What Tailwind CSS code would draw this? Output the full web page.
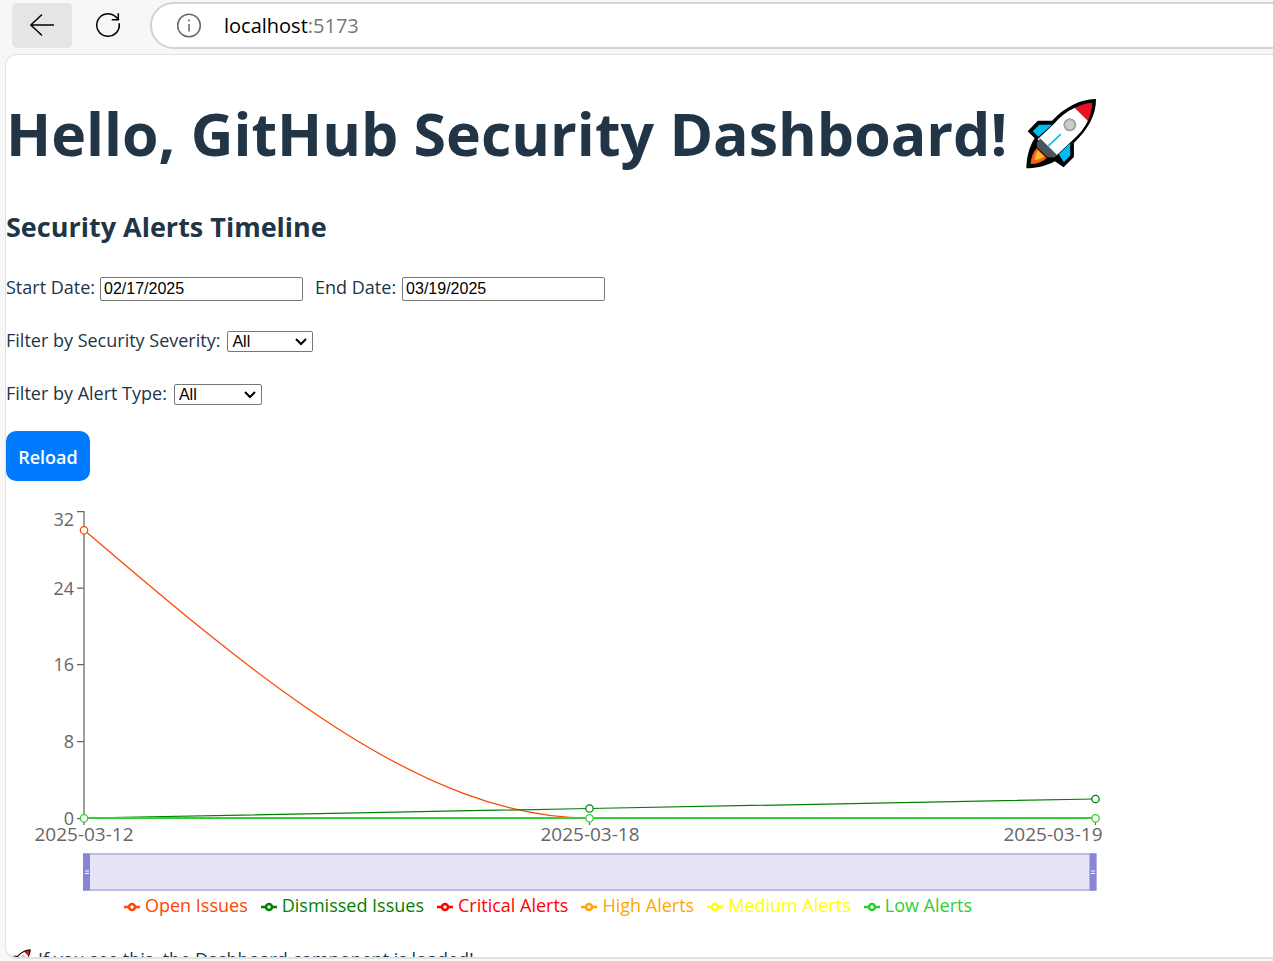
<!DOCTYPE html>
<html lang="en">
<head>
<meta charset="utf-8">
<title>GitHub Security Dashboard</title>
<script src="https://cdn.jsdelivr.net/npm/@tailwindcss/browser@4"></script>
</head>
<body class="flex h-screen flex-col overflow-hidden bg-[#f7f7f7] font-['Open_Sans','Noto_Sans',sans-serif] text-lg text-[#213547]">
<svg class="hidden" aria-hidden="true">
  <symbol id="rocket" viewBox="72 54 212 212">
    <path d="M281 57C235 56 184 84 150 122L107 122L77 153L98 174C82 198 74 228 73 264C104 264 133 257 158 243L184 261L215 230L215 188C255 151 282 106 281 57Z" fill="#000"/>
    <path d="M218 83C193 94 174 110 156 131L106 178L163 226L207 184C231 163 247 143 257 122Z" fill="#fff"/>
    <path d="M218 83C237 74 252 69 270 69C269 88 264 106 257 122Z" fill="#e81224"/>
    <path d="M150 134L112 134L92 153L109 170ZM204 188L204 226L185 246L170 222Z" fill="#00bcf2"/>
    <path d="M114 174L165 224L157 232L136 231L105 202L104 188Z" fill="#4d5459"/>
    <path d="M104 204L134 233C120 245 104 251 86 251C87 231 93 216 104 204Z" fill="#f7630c"/>
    <path d="M108 211L126 229C116 236 108 239 98 239C99 228 102 219 108 211Z" fill="#ffb92e"/>
    <path d="M139 197L176 162" stroke="#00bcf2" stroke-width="5" fill="none"/>
    <circle cx="203" cy="134" r="16.500" fill="#ccc" stroke="#a3a3a3" stroke-width="6"/>
  </symbol>
  <symbol id="legend-mark" viewBox="0 0 16 10">
    <path d="M0 5H5M11 5H16" stroke="currentColor" stroke-width="2.500"/>
    <circle cx="8" cy="5" r="3" fill="#fff" stroke="currentColor" stroke-width="2.500"/>
  </symbol>
</svg>

<header class="flex h-[54px] shrink-0 items-start pl-3 pt-[2px]">
  <button class="mt-px flex h-[45px] w-[60px] items-center justify-center rounded-[5px] bg-[#e5e5e5]" aria-label="Back">
    <svg class="h-6 w-6" viewBox="0 0 24 24" fill="none" stroke="#000" stroke-width="1.500" stroke-linecap="round" stroke-linejoin="round"><path d="M23.500 11H.8M11.500 1L.8 11L11.500 21"/></svg>
  </button>
  <button class="ml-[22px] mt-[9px] flex h-7 w-7 items-center justify-center" aria-label="Refresh">
    <svg class="h-7 w-7" viewBox="0 0 28 28" fill="none" stroke="#000" stroke-width="1.500" stroke-linecap="square"><path d="M25.300 13A11.300 11.300 0 1 1 21.500 5.500L24.500 8.500M24.300 3V8.800H18.500" /></svg>
  </button>
  <div class="-mr-6 ml-7 flex h-[47px] flex-1 items-center rounded-full border-2 border-[#d3d3d3] bg-white pl-6">
    <svg class="h-[26px] w-[26px] shrink-0" viewBox="0 0 26 26" fill="none" stroke="#666" stroke-width="1.500" aria-hidden="true"><circle cx="13" cy="12.500" r="11.300"/><path d="M13 11V18.500M13 6.500V8.500"/></svg>
    <p class="ml-[22px] text-xl text-black">localhost<span class="text-[#777]">:5173</span></p>
  </div>
</header>

<main class="-mr-4 mb-[2px] ml-[5px] min-h-0 flex-1 overflow-hidden rounded-[12px] border border-b-2 border-[#e2e2e2] bg-white">
  <h1 class="mt-9 flex h-[84px] items-center gap-[19px] whitespace-nowrap text-[59px] font-bold leading-none">Hello, GitHub Security Dashboard!
    <svg class="h-[71px] w-[71px]" role="img" aria-label="Rocket"><use href="#rocket"/></svg>
  </h1>
  <h2 class="mt-8 text-[27px] font-bold leading-10">Security Alerts Timeline</h2>

  <div class="mt-5 flex h-10 items-center">
    <label for="start">Start Date:</label>
    <input id="start" type="text" value="02/17/2025" class="ml-[5px] mt-[3px] h-6 w-[203px] rounded-[2px] border border-[#767676] bg-white px-[3px] font-['Liberation_Sans',sans-serif] text-base text-black">
    <label for="end" class="ml-3">End Date:</label>
    <input id="end" type="text" value="03/19/2025" class="ml-[6px] mt-[3px] h-6 w-[203px] rounded-[2px] border border-[#767676] bg-white px-[3px] font-['Liberation_Sans',sans-serif] text-base text-black">
  </div>
  <div class="mt-[13px] flex h-10 items-center">
    <label for="severity">Filter by Security Severity:</label>
    <div class="relative ml-[7px] mt-[2px] flex">
      <select id="severity" class="h-[21px] w-[86px] appearance-none rounded-[2px] border border-[#767676] bg-white pl-1 font-['Liberation_Sans',sans-serif] text-base leading-5 text-black"><option>All</option></select>
      <svg class="pointer-events-none absolute right-[6px] top-[7px] h-2 w-3" viewBox="0 0 12 8" fill="none" stroke="#000" stroke-width="2"><path d="M1 1L6 6L11 1"/></svg>
    </div>
  </div>
  <div class="mt-[13px] flex h-10 items-center">
    <label for="type">Filter by Alert Type:</label>
    <div class="relative ml-[7px] mt-[2px] flex">
      <select id="type" class="h-[21px] w-[88px] appearance-none rounded-[2px] border border-[#767676] bg-white pl-1 font-['Liberation_Sans',sans-serif] text-base leading-5 text-black"><option>All</option></select>
      <svg class="pointer-events-none absolute right-[6px] top-[7px] h-2 w-3" viewBox="0 0 12 8" fill="none" stroke="#000" stroke-width="2"><path d="M1 1L6 6L11 1"/></svg>
    </div>
  </div>
  <button class="mt-[18px] block h-[50px] w-[84px] rounded-[10px] bg-[#007bff] pt-[2px] text-lg font-semibold text-white">Reload</button>

  <svg class="mt-[19px] block h-[391px] w-[1100px]" viewBox="6 500 1100 391" fill="none" role="img" aria-label="Security alerts by date">
    <path d="M77 511.500H84M77 588H84M77 664.500H84M77 741.500H84M77 818.500H84M84 511V825M589.500 818V825M1095.500 818V825" stroke="#666" stroke-width="1.250"/>
    <g fill="#666" text-anchor="end" font-size="18">
      <text x="74" y="526">32</text><text x="74" y="595">24</text><text x="74" y="671">16</text><text x="74" y="748">8</text><text x="74" y="825">0</text>
    </g>
    <g fill="#666" text-anchor="middle" font-size="19">
      <text x="84" y="841">2025-03-12</text><text x="590" y="841">2025-03-18</text><text x="1053" y="841">2025-03-19</text>
    </g>
    <path d="M84 530C252.600 674 421 818 589.500 818H1095.500" stroke="#ff4500" stroke-width="1.250"/>
    <path d="M84 818L589.500 808.500L1095.500 799" stroke="#008000" stroke-width="1.250"/>
    <path d="M84 817.500H1095.500" stroke="#ffa500" stroke-width="1"/>
    <path d="M84 818.200H1095.500" stroke="#32cd32" stroke-width="1.800"/>
    <g fill="#fff" stroke-width="1.250">
      <circle cx="84" cy="530.300" r="3.700" stroke="#ff4500"/>
      <circle cx="589.500" cy="808.500" r="3.700" stroke="#008000"/><circle cx="1095.500" cy="799" r="3.700" stroke="#008000"/>
      <g stroke="#32cd32"><circle cx="84" cy="818.300" r="3.700"/><circle cx="589.500" cy="818.300" r="3.700"/><circle cx="1095.500" cy="818.300" r="3.700"/></g>
    </g>
    <rect x="83.700" y="854" width="1012" height="36" fill="#e6e5f5" stroke="#9c98de" stroke-width="1.250"/>
    <path d="M83 853.500H90V890.500H83ZM1089.500 853.500H1096.500V890.500H1089.500Z" fill="#8884d8"/>
    <path d="M85 871H89M85 873.500H89M1091 871H1095M1091 873.500H1095" stroke="#fff" stroke-width="1"/>
  </svg>
  <ul class="flex h-7 w-[1084px] items-center justify-center gap-[13px] whitespace-nowrap">
    <li class="flex items-center gap-[5px] text-[#ff4500]"><svg class="mt-1 h-[10px] w-4"><use href="#legend-mark"/></svg>Open Issues</li>
    <li class="flex items-center gap-[5px] text-[#008000]"><svg class="mt-1 h-[10px] w-4"><use href="#legend-mark"/></svg>Dismissed Issues</li>
    <li class="flex items-center gap-[5px] text-[#ff0000]"><svg class="mt-1 h-[10px] w-4"><use href="#legend-mark"/></svg>Critical Alerts</li>
    <li class="flex items-center gap-[5px] text-[#ffa500]"><svg class="mt-1 h-[10px] w-4"><use href="#legend-mark"/></svg>High Alerts</li>
    <li class="flex items-center gap-[5px] text-[#ffff00]"><svg class="mt-1 h-[10px] w-4"><use href="#legend-mark"/></svg>Medium Alerts</li>
    <li class="flex items-center gap-[5px] text-[#32cd32]"><svg class="mt-1 h-[10px] w-4"><use href="#legend-mark"/></svg>Low Alerts</li>
  </ul>
  <p class="mt-[26px] flex items-center gap-[7px] pl-1"><svg class="h-[21px] w-[21px]" role="img" aria-label="Rocket"><use href="#rocket"/></svg>If you see this, the Dashboard component is loaded!</p>
</main>
</body>
</html>
